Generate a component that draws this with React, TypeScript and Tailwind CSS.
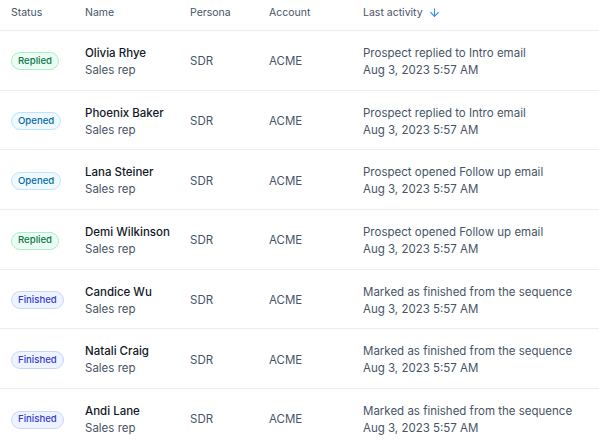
import { ArrowDown } from "lucide-react";

type Status = "Replied" | "Opened" | "Finished";

const rows: { status: Status; name: string; activity: string }[] = [
  { status: "Replied", name: "Olivia Rhye", activity: "Prospect replied to Intro email" },
  { status: "Opened", name: "Phoenix Baker", activity: "Prospect replied to Intro email" },
  { status: "Opened", name: "Lana Steiner", activity: "Prospect opened Follow up email" },
  { status: "Replied", name: "Demi Wilkinson", activity: "Prospect opened Follow up email" },
  { status: "Finished", name: "Candice Wu", activity: "Marked as finished from the sequence" },
  { status: "Finished", name: "Natali Craig", activity: "Marked as finished from the sequence" },
  { status: "Finished", name: "Andi Lane", activity: "Marked as finished from the sequence" },
];

const badgeStyles: Record<Status, string> = {
  Replied: "bg-[#ecfdf3] border-[#abefc6] text-[#067647]",
  Opened: "bg-[#f0f9ff] border-[#b9e6fe] text-[#026aa2]",
  Finished: "bg-[#eef4ff] border-[#c7d7fe] text-[#3538cd]",
};

const cols = "grid grid-cols-[74px_105px_79px_94px_1fr]";

export default function App() {
  return (
    <div className="w-[599px] bg-white font-['Inter',sans-serif] text-[11.5px]">
      {/* header */}
      <div className={`${cols} h-[31px] items-start pt-[5px] pl-[11px] border-b border-[#eaecf0] text-[10.5px] text-[#475467]`}>
        <div>Status</div>
        <div>Name</div>
        <div>Persona</div>
        <div>Account</div>
        <div className="flex items-center gap-[5px]">
          Last activity
          <ArrowDown size={13} strokeWidth={2} className="text-[#2e90fa]" />
        </div>
      </div>

      {rows.map((r) => (
        <div key={r.name} className={`${cols} h-[59.7px] items-center pt-[3px] pl-[11px] border-b border-[#eaecf0]`}>
          <div className="-mt-[1px]">
            <span className={`inline-flex items-center h-[18px] px-[6px] rounded-full border text-[9.6px] font-medium ${badgeStyles[r.status]}`}>
              {r.status}
            </span>
          </div>
          <div className="leading-[17px]">
            <div className="font-medium text-[#101828]">{r.name}</div>
            <div className="text-[#475467]">Sales rep</div>
          </div>
          <div className="text-[#475467]">SDR</div>
          <div className="text-[#475467]">ACME</div>
          <div className="leading-[17px] text-[#475467]">
            <div>{r.activity}</div>
            <div>Aug 3, 2023 5:57 AM</div>
          </div>
        </div>
      ))}
    </div>
  );
}
